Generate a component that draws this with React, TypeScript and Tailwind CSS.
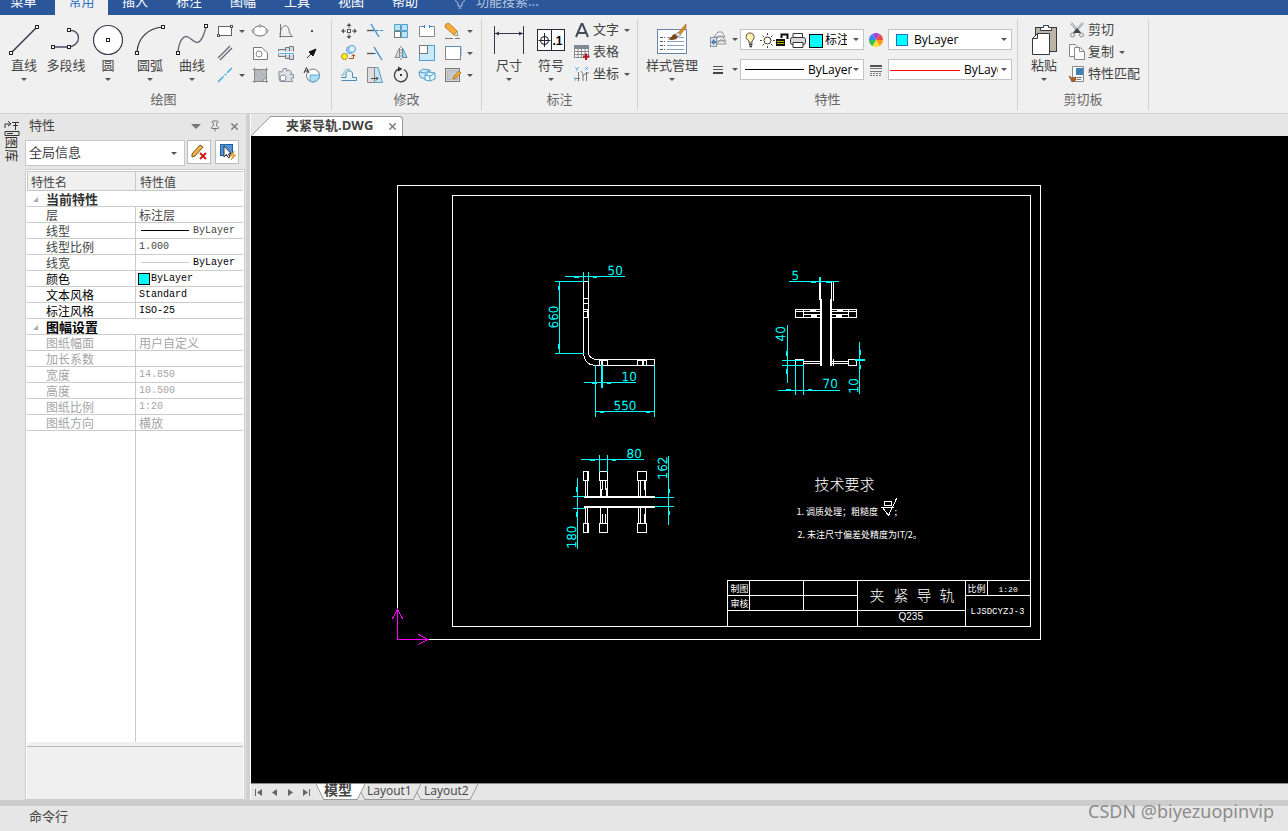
import type { ReactNode } from 'react';
import { Pin, X } from 'lucide-react';

interface IconProps {
  w?: number;
  h?: number;
  children: ReactNode;
}

function Icon({ w = 20, h = 20, children }: IconProps) {
  return (
    <svg width={w} height={h} viewBox={`0 0 ${w} ${h}`} fill="none" stroke="#555" strokeWidth="1" className="shrink-0" aria-hidden="true">
      {children}
    </svg>
  );
}

function Arrow() {
  return (
    <svg width="6" height="3" viewBox="0 0 6 3" className="shrink-0" aria-hidden="true">
      <path d="M0 0H6L3 3Z" fill="#555" />
    </svg>
  );
}

const handle = { width: 3, height: 3, fill: '#fff', stroke: '#222' };

const icons = {
  line: (
    <Icon w={34} h={34}>
      <path d="M5 29L29 5" stroke="#3b4050" strokeWidth="1.6" />
      <rect x="2.5" y="28.5" {...handle} />
      <rect x="28.5" y="2.5" {...handle} />
    </Icon>
  ),
  polyline: (
    <Icon w={34} h={34}>
      <path d="M4 24H18M20 7.500C33 6 33 24 18 24" stroke="#444c60" strokeWidth="1.3" />
      <rect x="2.500" y="22.500" {...handle} />
      <rect x="18.500" y="22.500" {...handle} />
      <rect x="18.500" y="5.500" {...handle} />
    </Icon>
  ),
  circle: (
    <Icon w={34} h={34}>
      <circle cx="17" cy="17" r="14.5" fill="#fff" stroke="#3b4050" strokeWidth="1.2" />
      <rect x="15.500" y="15.500" {...handle} />
    </Icon>
  ),
  arc: (
    <Icon w={34} h={34}>
      <path d="M4 29C5 15 15 5 30 4" stroke="#333" strokeWidth="1.2" />
      <rect x="2.500" y="28.500" {...handle} />
      <rect x="28.500" y="2.500" {...handle} />
    </Icon>
  ),
  spline: (
    <Icon w={34} h={34}>
      <path d="M3 29C4 17 9 12 13 14S21 22 25 18S29 9 31 5" stroke="#666b78" strokeWidth="1.3" />
      <rect x="1.500" y="28.500" {...handle} />
      <rect x="29.500" y="1.500" {...handle} />
    </Icon>
  ),
  dimension: (
    <Icon w={34} h={34}>
      <path d="M2.500 3V31M31.500 3V31M3 10.500H31" stroke="#333a4d" />
      <path d="M3 10.500L7 8.500V12.500ZM31 10.500L27 8.500V12.500Z" fill="#333a4d" stroke="none" />
    </Icon>
  ),
  symbol: (
    <Icon w={34} h={34}>
      <rect x="3.500" y="6.500" width="27" height="21" fill="#fff" stroke="#222a3a" />
      <path d="M17.500 6V28M10.500 10V24M4.500 17.500H16.500" stroke="#222a3a" />
      <circle cx="10.500" cy="17.500" r="4" stroke="#111" />
      <text x="18.500" y="22" fontSize="12" fontWeight="700" fill="#000" stroke="none" fontFamily="Liberation Sans, sans-serif">.1</text>
    </Icon>
  ),
  styles: (
    <Icon w={34} h={34}>
      <rect x="2.500" y="6.500" width="29" height="24" fill="#fff" stroke="#6685a8" />
      <path d="M5 14.500H10M5 18.500H10M5 22.500H10M5 26.500H10" stroke="#48688e" strokeDasharray="3 1" />
      <path d="M12 14.500H16M24 14.500H29M12 18.500H29M12 22.500H29M12 26.500H29" stroke="#8ba1bd" />
      <path d="M23 10L30 2L31 1V5L25 12Z" fill="#d98b2b" stroke="#a8611b" strokeWidth=".6" />
      <path d="M20 12L23 9L26 12L23 14Z" fill="#d9d9d9" stroke="#777" strokeWidth=".6" />
      <path d="M13 16C17 15 17 11 20 11L23 14C22 17 16 18 13 16Z" fill="#7b4a20" stroke="none" />
    </Icon>
  ),
  paste: (
    <Icon w={34} h={34}>
      <rect x="8.500" y="4.500" width="21" height="24" fill="#bdb3a6" stroke="#333a44" />
      <path d="M13.500 4.500H16.500V2.500H21.500V4.500H24.500V7.500H13.500Z" fill="#fff" stroke="#333a44" />
      <path d="M10.500 10.500H22.500V31.500H5.500V15.500Z" fill="#fff" stroke="#333a44" />
      <path d="M10.500 10.500V15.500H5.500" stroke="#333a44" />
    </Icon>
  ),
  rect: (
    <Icon>
      <rect x="3.500" y="5.500" width="13" height="9" fill="#fff" stroke="#666" />
      <rect x="2.500" y="13.500" width="2" height="2" fill="#fff" />
      <rect x="15.500" y="4.500" width="2" height="2" fill="#fff" />
    </Icon>
  ),
  ellipse: (
    <Icon>
      <ellipse cx="10" cy="10" rx="7" ry="5" fill="#fff" stroke="#666c78" />
      <path d="M2 9h2v2H2zM16 9h2v2h-2zM9 4h2v2H9z" fill="#fff" stroke="#777" strokeWidth=".7" />
    </Icon>
  ),
  curve: (
    <Icon>
      <path d="M4.500 3V16.500M3 15.500H17" stroke="#777" />
      <path d="M4 14C5 2 12 3 13 9S15 14 16 14" stroke="#777" />
    </Icon>
  ),
  point: (
    <Icon>
      <rect x="9" y="9" width="2" height="2" fill="#555" stroke="none" />
    </Icon>
  ),
  parallel: (
    <Icon>
      <path d="M3 15L15 3M5 17L17 5" stroke="#666b76" strokeWidth="1.4" />
    </Icon>
  ),
  contour: (
    <Icon>
      <path d="M3.500 4.500H12L17.500 10V16.500H3.500Z" fill="#fff" stroke="#777" />
      <circle cx="9" cy="11" r="3" stroke="#888" />
    </Icon>
  ),
  shaft: (
    <Icon>
      <path d="M2.500 6.500H9.500V4.500H13.500V3.500H17.500V16.500H13.500V15.500H9.500V13.500H2.500Z" fill="#d5d8dc" stroke="#6e7986" />
      <path d="M9.500 6V14M13.500 5V16" stroke="#6e7986" />
      <path d="M2 10H18" stroke="#fff" strokeWidth="3" />
      <path d="M2 10.500H18" stroke="#55aeea" />
    </Icon>
  ),
  pointer: (
    <Icon>
      <path d="M5 15L12 8" stroke="#333" />
      <path d="M14 6L7 9L11 13Z" fill="#111" stroke="#111" />
    </Icon>
  ),
  axis: (
    <Icon>
      <path d="M3 17L17 3" stroke="#3aace0" strokeWidth="1.400" strokeDasharray="8 1.500 2 1.500" />
    </Icon>
  ),
  hatch: (
    <Icon>
      <path d="M4.500 4.500H16.500V12L12 16.500H4.500Z" fill="#b8bcc2" stroke="#777" />
      <path d="M2.500 4.500H18M4.500 2.500V18M16.500 2.500V18M2.500 16.500H18" stroke="#888" />
      <path d="M5 8L13 16M8 5L16 13" stroke="#9a9ea5" strokeDasharray="1 1" />
    </Icon>
  ),
  gear: (
    <Icon>
      <path d="M7.500 3.500L10.500 3.500L10.500 6L13 5L15.500 7L14.500 9.500H17.500V13H15L16.500 16.500H4L3 13V6.500L6 7Z" fill="#dde1e6" stroke="#84909e" />
      <circle cx="7" cy="13" r="3" fill="#fff" stroke="#84909e" />
    </Icon>
  ),
  region: (
    <Icon>
      <circle cx="11" cy="10.500" r="6.500" fill="#fff" stroke="#777" />
      <path d="M8 10H17.500A6.500 6.500 0 0 1 8 16Z" fill="#aeddf7" stroke="#59a9d8" />
      <path d="M2 8L4.500 2.500L7 8M3 6H6" stroke="#333" />
    </Icon>
  ),
  move: (
    <Icon>
      <path d="M10 3V7M10 13V17M3 10H7M13 10H17" stroke="#555" />
      <path d="M10 2L7.500 5H12.500ZM10 18L7.500 15H12.500ZM2 10L5 7.500V12.500ZM18 10L15 7.500V12.500Z" fill="#555" stroke="none" />
      <rect x="8.500" y="8.500" width="3" height="3" fill="#fff" />
    </Icon>
  ),
  trim: (
    <Icon>
      <path d="M2 9.500H9" stroke="#555" strokeWidth="1.400" />
      <path d="M11 9.500H18" stroke="#3b8fd5" strokeDasharray="3 1" />
      <path d="M6 3L14 16" stroke="#3b8fd5" strokeWidth="1.400" />
    </Icon>
  ),
  array: (
    <Icon>
      <path d="M3.500 3.500H9.500V9.500H3.500ZM10.500 3.500H16.500V9.500H10.500ZM10.500 10.500H16.500V16.500H10.500Z" fill="#bfe4f8" stroke="#4d9fd0" />
      <rect x="3.500" y="10.500" width="6" height="6" fill="#fff" stroke="#777" />
    </Icon>
  ),
  breakAt: (
    <Icon>
      <path d="M6 5.500H2.500V15.500H17.500V5.500H13" fill="#fff" stroke="#888" />
      <path d="M5 5.500H8M12 5.500H15M7.500 4V7M12.500 4V7" stroke="#2e87cf" />
    </Icon>
  ),
  erase: (
    <Icon>
      <path d="M3 3L6 2.500L14 10L11 14L2 6Z" fill="#f6ad38" stroke="#c77c1c" />
      <path d="M11 14L14 10L15 15Z" fill="#f8ded0" stroke="#996" />
      <path d="M2 17.500H10M12 17.500H17" stroke="#777" />
    </Icon>
  ),
  copyObject: (
    <Icon>
      <circle cx="5.500" cy="13.500" r="3" fill="#ffee20" stroke="#a18f18" />
      <circle cx="11" cy="7" r="3.500" fill="#c9e8fa" stroke="#4b9ed4" />
      <circle cx="13" cy="6" r="3.500" fill="#e4f4fc" stroke="#4b9ed4" />
      <path d="M10 15.500H14.500V12M12.500 13L14.500 11.500L16.500 13" stroke="#a74b25" />
    </Icon>
  ),
  extend: (
    <Icon>
      <path d="M2 10.500H9" stroke="#555" strokeWidth="1.400" />
      <path d="M9 10.500H14" stroke="#3b8fd5" strokeDasharray="2 1" />
      <path d="M9 4L17 17" stroke="#3b8fd5" strokeWidth="1.400" />
    </Icon>
  ),
  mirror: (
    <Icon>
      <path d="M8.500 5V14.500H4Z" fill="#ddd" stroke="#888" />
      <path d="M11.500 5V14.500H16Z" fill="#a9d7f0" stroke="#5689aa" />
      <path d="M10 3V17" stroke="#888" strokeDasharray="2 1" />
    </Icon>
  ),
  scale: (
    <Icon>
      <rect x="2.500" y="2.500" width="15" height="15" fill="#c7e9fa" stroke="#4d9fd0" />
      <rect x="2.500" y="2.500" width="8" height="8" fill="#fff" stroke="#777" />
    </Icon>
  ),
  stretch: (
    <Icon>
      <rect x="2.500" y="3.500" width="15" height="13" fill="#fff" stroke="#888" />
      <path d="M2 3.500H18V13" stroke="#3b8fd5" strokeDasharray="2 1" />
    </Icon>
  ),
  offset: (
    <Icon>
      <path d="M2 12.500H7V8A3.500 3.500 0 0 1 13.500 8V12.500H17.500V15.500H2.500" fill="#e5f4fb" stroke="#5689aa" />
      <path d="M2 10H5V7A5 5 0 0 1 11 4.500" stroke="#66b5df" />
    </Icon>
  ),
  taper: (
    <Icon>
      <path d="M9.500 2.500H13L17.500 17.500H9.500Z" fill="#c4e5f6" stroke="#5a9bc0" />
      <path d="M2.500 2.500H9.500V17.500H2.500Z" fill="#ddd" stroke="#888" />
      <path d="M6 13.500H13M11 11.500L13 13.500L11 15.500" stroke="#444" />
    </Icon>
  ),
  rotate: (
    <Icon>
      <path d="M8 4A6.500 6.500 0 1 0 13 4.500" stroke="#444" strokeWidth="1.400" />
      <path d="M7 1.500L11.500 4L7 6.500Z" fill="#333" stroke="none" />
      <rect x="9" y="9" width="2" height="2" fill="#333" stroke="none" />
    </Icon>
  ),
  box3d: (
    <Icon>
      <path d="M2 7L6 4L13 5V12L8 14L3 12Z" fill="#cfeaf8" stroke="#4d9fd0" />
      <path d="M8 10L12 7L18 8V14L13 16L8 15Z" fill="#e9f7fd" stroke="#4d9fd0" />
      <path d="M2 7L8 8L13 5M8 10L13 11L18 8M13 11V16" stroke="#4d9fd0" />
    </Icon>
  ),
  editHatch: (
    <Icon>
      <rect x="2.500" y="3.500" width="14" height="13" fill="#fff" stroke="#777" />
      <rect x="4" y="5" width="11" height="10" fill="#c5c8cc" stroke="#aaa" />
      <path d="M10 14L11 11L16 6L18 8L13 13Z" fill="#f6ad38" stroke="#b97720" />
    </Icon>
  ),
  letter: (
    <Icon>
      <path d="M4 17L9.500 4H10.500L16 17M6 13H14" stroke="#454b57" strokeWidth="2" />
    </Icon>
  ),
  table: (
    <Icon>
      <rect x="2.500" y="3.500" width="14" height="12" fill="#fff" stroke="#888" />
      <rect x="2" y="3" width="15" height="4" fill="#7e8996" stroke="none" />
      <path d="M2 9.500H17M2 12.500H17M6 7V16M9.500 7V16M13 7V16" stroke="#888" />
      <path d="M14 11.500V18M11 14.500H17.500" stroke="#b61821" strokeWidth="2" />
    </Icon>
  ),
  coords: (
    <Icon>
      <path d="M6.500 8V17.500M3 14.500H8M14.500 8V17M11 17V10L9 7M11 12L14 9H17" stroke="#777" />
      <path d="M3 3L5 5L7 3M5 5V7M13 3L16 6M16 3L13 6M2 13L4 17" stroke="#58aedc" strokeWidth=".9" />
    </Icon>
  ),
  layers: (
    <Icon>
      <path d="M6 7L10 2H14L17 7ZM8 11L10 6H14L18 11ZM9 14L12 10H15L18 14Z" fill="#f4f5f7" stroke="#8d939c" />
      <rect x="2.500" y="7.500" width="6" height="9" fill="#e5eaf0" stroke="#8590a0" />
      <path d="M3.500 12H8M5.500 9.500V14.500" stroke="#4d7ca8" strokeWidth="2" />
    </Icon>
  ),
  lines: (
    <Icon>
      <path d="M5 6.500H15M5 9.500H15" stroke="#555" />
      <path d="M5 13H15" stroke="#444" strokeWidth="2" />
    </Icon>
  ),
  weights: (
    <Icon w={14} h={14}>
      <path d="M1 3H13" stroke="#555" strokeWidth="2" />
      <path d="M1 5.500H13M1 8.500H13" stroke="#777" />
      <path d="M1 10.500H13M1 12.500H13" stroke="#777" strokeDasharray="2 1" />
    </Icon>
  ),
  wheel: (
    <Icon w={14} h={14}>
      <g stroke="none">
        <path d="M7 7L3.500 1A7 7 0 0 1 10.500 1Z" fill="#a63ee8" />
        <path d="M7 7L10.500 1A7 7 0 0 1 14 7Z" fill="#ec4b42" />
        <path d="M7 7H14A7 7 0 0 1 10.500 13Z" fill="#ff9b1a" />
        <path d="M7 7L10.500 13A7 7 0 0 1 3.500 13Z" fill="#ffe02b" />
        <path d="M7 7L3.500 13A7 7 0 0 1 0 7Z" fill="#35bd57" />
        <path d="M7 7H0A7 7 0 0 1 3.500 1Z" fill="#3388ea" />
      </g>
    </Icon>
  ),
  cut: (
    <Icon>
      <path d="M4 3L13 13M16 3L7 13" stroke="#8a929c" strokeWidth="2.400" />
      <path d="M4 3L13 13M16 3L7 13" stroke="#eee" />
      <path d="M10 8L14 13H6Z" fill="#444" stroke="none" />
      <circle cx="5.500" cy="15" r="2" stroke="#888" />
      <circle cx="14.500" cy="15" r="2" stroke="#888" />
    </Icon>
  ),
  copy: (
    <Icon>
      <path d="M2.500 2.500H8L10.500 5V14.500H2.500Z" fill="#fff" stroke="#888" />
      <path d="M7.500 5.500H13L17.500 9.500V17.500H7.500Z" fill="#fff" stroke="#888" />
      <path d="M12.500 6V9.500H17" stroke="#888" />
    </Icon>
  ),
  match: (
    <Icon>
      <path d="M5.500 2.500H16.500V17.500H5.500Z" fill="#fff" stroke="#888" />
      <rect x="9" y="4" width="7" height="7" fill="#3d7fb9" stroke="none" />
      <path d="M10 13.500H15M10 15.500H14" stroke="#777" />
      <path d="M2 12L5 14L9 13V16L5 18Z" fill="#b9601c" stroke="#7c3b10" strokeWidth=".6" />
    </Icon>
  ),
};

const menus = ['插入', '标注', '图幅', '工具', '视图', '帮助'];

function MenuBar() {
  return (
    <nav className="flex h-[15px] items-end overflow-hidden bg-[#2b579a] text-[13px] leading-4 text-white">
      <button className="w-[55px] pr-2 pb-1.5">菜单</button>
      <button className="w-[53px] bg-[#f0f0f0] pb-1.5 text-[#2b6cc4]">常用</button>
      {menus.map((name) => (
        <button key={name} className="w-[54px] pb-1.5">{name}</button>
      ))}
      <div className="ml-5 flex items-end gap-2 text-[#b4c4de]">
        <svg width="16" height="17" viewBox="0 0 16 17" fill="none" stroke="#b4c4de" className="mb-1.5" aria-hidden="true">
          <path d="M6 14V11C2 9 2 3 8 3S14 9 10 11V14H6M6.500 16H9.500" />
        </svg>
        <span className="pb-1.5">功能搜索...</span>
      </div>
    </nav>
  );
}

function Group({ label, className, inner, children }: { label: string; className: string; inner: string; children: ReactNode }) {
  return (
    <section className={`flex flex-col border-r border-[#d2d2d2] ${className}`}>
      <div className={`flex h-[71px] ${inner}`}>{children}</div>
      <h2 className="text-center text-[13px] leading-[18px] text-[#666]">{label}</h2>
    </section>
  );
}

function BigButton({ icon, label, arrow = true, className = 'w-[42px]' }: { icon: ReactNode; label: string; arrow?: boolean; className?: string }) {
  return (
    <button className={`flex shrink-0 flex-col items-center pt-1 ${className}`}>
      {icon}
      <span className="text-[13px] leading-4 whitespace-nowrap">{label}</span>
      {arrow && <span className="mt-[5px]"><Arrow /></span>}
    </button>
  );
}

function Tool({ icon, label, arrow = false }: { icon: ReactNode; label: string; arrow?: boolean }) {
  return (
    <button aria-label={label} className="flex h-[22px] items-center pl-0.5">
      {icon}
      {arrow && <span className="pl-1"><Arrow /></span>}
    </button>
  );
}

function TextTool({ icon, label, arrow = false }: { icon: ReactNode; label: string; arrow?: boolean }) {
  return (
    <button className="flex h-[22px] items-center gap-px text-[13px] whitespace-nowrap">
      {icon}
      <span className="pb-0.5">{label}</span>
      {arrow && <span className="pl-1"><Arrow /></span>}
    </button>
  );
}

function Combo({ label, value, before, className }: { label: string; value: string; before: ReactNode; className: string }) {
  return (
    <div className="flex h-[21px] w-[124px] items-center border border-[#c3c3c3] bg-white pr-1 text-xs text-black">
      {before}
      <select aria-label={label} className={`min-w-0 appearance-none overflow-hidden font-['Open_Sans','Noto_Sans_CJK_SC',sans-serif] ${className}`}>
        <option>{value}</option>
      </select>
      <span className="ml-auto"><Arrow /></span>
    </div>
  );
}

function LayerIcons() {
  return (
    <Icon w={84} h={18}>
      <path d="M8 12V10C4 8 4 2 9 2S14 8 11 10V12Z" fill="#ffefb0" stroke="#554" />
      <path d="M8 13.500H11.500M8.500 15.500H11" stroke="#333" strokeWidth="1.500" />
      <circle cx="26.500" cy="9.500" r="3.500" fill="#fff" stroke="#443322" />
      <path d="M26.500 2V4M26.500 15V17M19 9.500H21M32 9.500H34M21.500 4.500L23 6M30 13L31.500 14.500M31.500 4.500L30 6M23 13L21.500 14.500" stroke="#554433" />
      <path d="M35 8H44V15H35Z" fill="#111" stroke="none" />
      <path d="M36 10.500H43M36 12.500H43" stroke="#b4b400" />
      <path d="M40.500 7V3.500H46.500V8" stroke="#111" strokeWidth="2" />
      <path d="M52 7V2.500H61.500V7" fill="#fff" stroke="#333" />
      <rect x="49.500" y="6.500" width="15" height="7" rx="2" fill="#d6d9dd" stroke="#333" />
      <path d="M52 11.500H62V16.500H52Z" fill="#fff" stroke="#333" />
      <rect x="68.500" y="3.500" width="13" height="13" fill="#00ffff" stroke="#000" />
    </Icon>
  );
}

function Ribbon() {
  return (
    <div className="flex h-[99px] border-b border-[#d2d2d2] bg-[#f0f0f0] pt-1 pb-[3px] text-[#444]">
      <Group label="绘图" className="w-[332px] pr-1" inner="pl-[3px]">
        <BigButton icon={icons.line} label="直线" />
        <BigButton icon={icons.polyline} label="多段线" arrow={false} />
        <BigButton icon={icons.circle} label="圆" />
        <BigButton icon={icons.arc} label="圆弧" />
        <BigButton icon={icons.spline} label="曲线" />
        <div className="grid h-[66px] grid-cols-[35px_26px_26px_26px] pt-px">
          <Tool icon={icons.rect} label="矩形" arrow />
          <Tool icon={icons.ellipse} label="椭圆" />
          <Tool icon={icons.curve} label="公式曲线" />
          <Tool icon={icons.point} label="点" />
          <Tool icon={icons.parallel} label="平行线" />
          <Tool icon={icons.contour} label="局部放大" />
          <Tool icon={icons.shaft} label="孔/轴" />
          <Tool icon={icons.pointer} label="箭头" />
          <Tool icon={icons.axis} label="中心线" arrow />
          <Tool icon={icons.hatch} label="剖面线" />
          <Tool icon={icons.gear} label="齿形" />
          <Tool icon={icons.region} label="填充" />
        </div>
      </Group>
      <Group label="修改" className="w-[150px]" inner="pl-[5px]">
        <div className="grid h-[66px] grid-cols-[26px_26px_26px_26px_36px] pt-px">
          <Tool icon={icons.move} label="平移" />
          <Tool icon={icons.trim} label="裁剪" />
          <Tool icon={icons.array} label="阵列" />
          <Tool icon={icons.breakAt} label="打断" />
          <Tool icon={icons.erase} label="删除" arrow />
          <Tool icon={icons.copyObject} label="平移复制" />
          <Tool icon={icons.extend} label="延伸" />
          <Tool icon={icons.mirror} label="镜像" />
          <Tool icon={icons.scale} label="缩放" />
          <Tool icon={icons.stretch} label="拉伸" arrow />
          <Tool icon={icons.offset} label="等距线" />
          <Tool icon={icons.taper} label="过渡" />
          <Tool icon={icons.rotate} label="旋转" />
          <Tool icon={icons.box3d} label="分解" />
          <Tool icon={icons.editHatch} label="编辑剖面线" arrow />
        </div>
      </Group>
      <Group label="标注" className="w-[156px]" inner="pl-1.5">
        <BigButton icon={icons.dimension} label="尺寸" />
        <BigButton icon={icons.symbol} label="符号" />
        <div>
          <TextTool icon={icons.letter} label="文字" arrow />
          <TextTool icon={icons.table} label="表格" />
          <TextTool icon={icons.coords} label="坐标" arrow />
        </div>
      </Group>
      <Group label="特性" className="w-[380px]" inner="pl-1.5">
        <BigButton icon={icons.styles} label="样式管理" className="w-14" />
        <div className="grid grid-cols-[34px_124px_24px_124px] grid-rows-[21px_21px] items-center gap-y-[9px] pt-2.5 pl-1.5">
          <Tool icon={icons.layers} label="图层" arrow />
          <Combo label="当前层" value="标注层" before={<LayerIcons />} className="w-[22px]" />
          <span className="flex justify-center">{icons.wheel}</span>
          <Combo label="颜色" value="ByLayer" before={<span className="mr-1.5 ml-[7px] size-3 border border-[#1874cd] bg-[#00ffff]" />} className="w-20" />
          <Tool icon={icons.lines} label="线型管理" arrow />
          <Combo label="线型" value="ByLayer" before={<span className="mr-1 ml-1 h-px w-[59px] shrink-0 bg-black" />} className="w-11" />
          <span className="flex justify-center">{icons.weights}</span>
          <Combo
            label="线宽"
            value="ByLayer"
            before={
              <svg width="75" height="19" viewBox="0 0 75 19" className="shrink-0" aria-hidden="true">
                <path d="M1 10.500H71" stroke="#ff0000" />
              </svg>
            }
            className="w-[34px]"
          />
        </div>
      </Group>
      <Group label="剪切板" className="w-[131px]" inner="pl-[5px]">
        <BigButton icon={icons.paste} label="粘贴" />
        <div className="pl-0.5">
          <TextTool icon={icons.cut} label="剪切" />
          <TextTool icon={icons.copy} label="复制" arrow />
          <TextTool icon={icons.match} label="特性匹配" />
        </div>
      </Group>
    </div>
  );
}

interface Row {
  name: string;
  value?: ReactNode;
  tone: string;
  heading?: boolean;
}

const mono = "flex h-[15px] items-center font-['Liberation_Mono',monospace] text-[10px] leading-[15px]";

const rows: Row[] = [
  { name: '当前特性', tone: 'text-[#333]', heading: true },
  { name: '层', value: '标注层', tone: 'text-[#444]' },
  { name: '线型', value: <span className={`gap-1 pl-0.5 ${mono}`}><i className="h-px w-12 bg-black" />ByLayer</span>, tone: 'text-[#444]' },
  { name: '线型比例', value: <span className={mono}>1.000</span>, tone: 'text-[#444]' },
  { name: '线宽', value: <span className={`gap-1 pl-0.5 text-black ${mono}`}><i className="h-px w-12 bg-[#ccc]" />ByLayer</span>, tone: 'text-[#444]' },
  { name: '颜色', value: <span className={`-ml-px gap-px ${mono}`}><i className="size-3 border border-black bg-[#0ff]" />ByLayer</span>, tone: 'text-black' },
  { name: '文本风格', value: <span className={mono}>Standard</span>, tone: 'text-black' },
  { name: '标注风格', value: <span className={mono}>ISO-25</span>, tone: 'text-black' },
  { name: '图幅设置', tone: 'text-black', heading: true },
  { name: '图纸幅面', value: '用户自定义', tone: 'text-[#a5a5a5]' },
  { name: '加长系数', value: '', tone: 'text-[#a5a5a5]' },
  { name: '宽度', value: <span className={mono}>14.850</span>, tone: 'text-[#a5a5a5]' },
  { name: '高度', value: <span className={mono}>10.500</span>, tone: 'text-[#a5a5a5]' },
  { name: '图纸比例', value: <span className={mono}>1:20</span>, tone: 'text-[#a5a5a5]' },
  { name: '图纸方向', value: '横放', tone: 'text-[#a5a5a5]' },
];

function PropertyTable() {
  return (
    <table className="w-full table-fixed border-separate border-spacing-0 text-xs leading-[15px]">
      <colgroup>
        <col className="w-[109px]" />
        <col />
      </colgroup>
      <thead>
        <tr className="h-5 bg-[#f0f0f0] text-left text-[#444]">
          <th className="border-y border-r border-l border-[#c8c8c8] pl-[3px] font-normal">特性名</th>
          <th className="border-y border-[#c8c8c8] pl-1 font-normal">特性值</th>
        </tr>
      </thead>
      <tbody>
        {rows.map((row) =>
          row.heading ? (
            <tr key={row.name} className={`h-4 ${row.tone}`}>
              <th colSpan={2} className="h-4 border-b border-[#ccc] p-0 text-left text-[13px] leading-[15px] font-bold">
                <span className="flex items-center">
                  <svg width="19" height="10" viewBox="0 0 19 10" aria-hidden="true">
                    <path d="M11 3V8H6Z" fill="#aaa" />
                  </svg>
                  {row.name}
                </span>
              </th>
            </tr>
          ) : (
            <tr key={row.name} className={`h-4 ${row.tone}`}>
              <td className="h-4 border-r border-b border-[#ccc] p-0 pl-[19px]">{row.name}</td>
              <td className="h-4 border-b border-[#ccc] p-0 pl-[3px]">{row.value}</td>
            </tr>
          )
        )}
      </tbody>
    </table>
  );
}

function PropertyPanel() {
  return (
    <aside className="flex w-[220px] shrink-0 flex-col">
      <header className="flex h-6 items-center gap-2 pr-[5px] pl-1 text-[13px] text-[#444]">
        <h2 className="flex-1 pb-0.5">特性</h2>
        <button aria-label="选项">
          <svg width="10" height="5" viewBox="0 0 10 5" aria-hidden="true"><path d="M0 0H10L5 5Z" fill="#777" /></svg>
        </button>
        <button aria-label="固定"><Pin size={12} color="#777" /></button>
        <button aria-label="关闭"><X size={11} color="#777" strokeWidth={3} /></button>
      </header>
      <div className="flex gap-0.5 pt-0.5 pb-[3px]">
        <div className="flex h-[26px] w-[160px] items-center border border-[#c8c8c8] bg-white pr-[7px] pl-[3px]">
          <select aria-label="对象" className="flex-1 appearance-none pb-0.5 text-[13px] text-[#444]">
            <option>全局信息</option>
          </select>
          <Arrow />
        </div>
        <div className="flex gap-1">
          <button aria-label="清除" className="flex size-6 items-center justify-center border border-[#bbb] bg-white">
            <Icon>
              <path d="M3 12L11 3L14 5L6 14L3 15Z" fill="#f5b33d" stroke="#6c5423" />
              <path d="M11 11L17 17M17 11L11 17" stroke="#d21a1a" strokeWidth="2" />
            </Icon>
          </button>
          <button aria-label="快速选择" className="flex size-6 items-center justify-center border border-[#bbb] bg-white">
            <Icon>
              <rect x="3.500" y="2.500" width="12" height="11" fill="#4d95d8" stroke="#1f5fa5" />
              <path d="M7 4V15L9.500 12.500L11.500 16L13 15L11.500 12L14 11.500Z" fill="#fff" stroke="#333" />
              <path d="M17 9L13 14H16L14 18L19 13H16Z" fill="#ffbf3a" stroke="#d27f12" strokeWidth=".6" />
            </Icon>
          </button>
        </div>
      </div>
      <div className="flex flex-1 flex-col border border-[#ccc] bg-white px-px pt-px">
        <PropertyTable />
        <div className="flex-1">
          <div className="h-full w-[109px] border-r border-[#ccc]" />
        </div>
        <div className="h-1 bg-[#f0f0f0]" />
        <div className="h-[53px] border-t border-[#b8b8b8] bg-[#f0f0f0]" />
      </div>
    </aside>
  );
}

const cjk = "'Noto Sans CJK SC', sans-serif";

function Dim({ x, y, upright = false, children }: { x: number; y: number; upright?: boolean; children: string }) {
  return (
    <text x={x} y={y} transform={upright ? `rotate(-90 ${x} ${y})` : undefined}>
      {children}
    </text>
  );
}

function Drawing() {
  return (
    <svg className="block h-full w-full" role="img" aria-label="夹紧导轨">
      {/* half-pixel shift puts whole-number strokes on pixel centres */}
      <g transform="translate(-250.5 -135.5)" fill="none" stroke="#fff" strokeLinecap="square" shapeRendering="crispEdges">
        <path d="M397 185H1040V639H397ZM452 195H1030V626H452Z" />

        {/* title block */}
        <path d="M727 626V580H1030M727 595H857M727 610H965M749 580V610M803 580V610M857 580V626M965 580V626M987 580V595M965 595H1030" />

        {/* side view */}
        <path d="M583 353V281H588V353M583 298H588M583 303H588M583 309H588M583 311H588M583 317H588M587 309V317" />
        <path d="M583 353Q584 364 594 365H654V359H596Q589 358 588 353" />
        <path d="M599 360V365M601 360V365M602 360V365M607 360V365M599 360H607M637 360V365M642 360V365M643 360V365M646 360V365M637 360H646" />

        {/* front view */}
        <path d="M819 282V299M820 282V299M831 282V300M833 282V300" />
        <path d="M820 299V365M821 299V365M830 299V365M831 299V365" />
        <path d="M795 309H820M795 311H820M803 314H820M795 317H820M795 309V317M803 309V317M810 310H815M811 315H816M811 316H816" />
        <path d="M831 309H856M831 311H856M831 314H848M831 317H856M848 309V317M856 309V317M837 310H842M836 315H841M836 316H841" />
        <path d="M795 359H803V365H795ZM803 361H820M803 363H820M848 359H856V365H848ZM833 359V365M831 361H848M831 363H848" />

        {/* top view */}
        <path d="M583 471H588V480H583ZM599 471H607V480H599ZM637 471H646V480H637ZM583 523H588V532H583ZM599 523H607V532H599ZM637 523H646V532H637Z" />
        <path d="M587 471V480M585 481V495M587 481V495M585 508V523M587 508V523M587 523V532" />
        <path d="M600 480V496M602 480V489M601 489V496M605 480V489M607 480V496M606 488V496M600 507V523M602 514V523M605 514V523M607 507V523" />
        <path d="M638 480V496M640 480V496M644 480V489M645 480V496M638 507V523M640 507V523M644 514V523M645 507V523" />
        <path d="M584 496H654M584 497H654M584 506H654M584 507H654" />

        <g stroke="#0ff">
          <path d="M565 276H624M583 272V281M588 272V281M555 281H583M555 353H583M559 281V353" />
          <path d="M584 382H635M601 365V387M602 365V387M595 365V416M654 365V416M595 411H654" />
          <path d="M574 277H578M593 277H596M558 286V289M558 344V348M592 383H596M607 383H610M600 412H603M646 412H649" />

          <path d="M789 281H838M819 277V282M820 277V282M787 325V382M782 360H803M782 365H803" />
          <path d="M778 390H839M795 365V394M803 365V394M859 342V393M855 359H864M855 360H864" />
          <path d="M811 282H815M826 282H830M786 351V355M786 369V373M786 389H790M808 389H811M860 350V354M860 365V368" />

          <path d="M581 459H643M599 455V471M607 455V471M577 478V548M573 496H584M573 508H584" />
          <path d="M668 456V524M654 497H673M654 506H673M590 460H594M612 460H615M576 487V491M576 512V516M669 489V492M669 511V514" />
        </g>

        <g fill="#0ff" stroke="#0ff" strokeWidth=".4" fontFamily="'DejaVu Sans', sans-serif" fontSize="12" fontWeight="200">
          <Dim x={607} y={274}>50</Dim>
          <Dim x={557} y={328} upright>660</Dim>
          <Dim x={621} y={380}>10</Dim>
          <Dim x={613} y={409}>550</Dim>
          <Dim x={791} y={279}>5</Dim>
          <Dim x={784} y={341} upright>40</Dim>
          <Dim x={822} y={387}>70</Dim>
          <Dim x={857} y={393} upright>10</Dim>
          <Dim x={626} y={457}>80</Dim>
          <Dim x={666} y={479} upright>162</Dim>
          <Dim x={575} y={548} upright>180</Dim>
        </g>

        <g fill="#fff" stroke="none" fontFamily={cjk} fontSize="9">
          <text x="814" y="489" fontSize="15" fontWeight="300">技术要求</text>
          <text x="796" y="514">1. 调质处理；粗糙度</text>
          <text x="894" y="514">;</text>
          <text x="797" y="537">2. 未注尺寸偏差处精度为IT/2。</text>
          <text x="730" y="591">制图</text>
          <text x="730" y="606">审核</text>
          <text x="967" y="591">比例</text>
          <text y="600" fontSize="15" fontWeight="300">
            <tspan x="869">夹</tspan>
            <tspan x="893">紧</tspan>
            <tspan x="916">导</tspan>
            <tspan x="939">轨</tspan>
          </text>
          <text x="898" y="619" fontSize="10" fontFamily="'Liberation Sans', sans-serif">Q235</text>
          <text x="998" y="591" fontSize="8" fontFamily="'Liberation Mono', monospace">1:20</text>
          <text x="970" y="613" fontFamily="'Liberation Mono', monospace">LJSDCYZJ-3</text>
        </g>
        <path d="M881 507H893M882 507L888 515L896 498M884 501H891V505H884Z" />

        <path d="M397 639V610M397 639H427M392 618L397 609L402 618M418 634L427 639L418 644" stroke="#f0f" />
      </g>
    </svg>
  );
}

function EndMark() {
  return (
    <svg width="7" height="7" viewBox="0 0 7 7" aria-hidden="true">
      <path d="M0 0H1V7H0ZM7 0V7L2 3.500Z" fill="#666" />
    </svg>
  );
}

function SheetTabs() {
  return (
    <div className="flex h-[17px] items-stretch border-t border-[#888] text-xs leading-[15px] text-[#444]">
      <div className="flex w-[65px] items-center justify-between pr-1.5 pl-1">
        <button aria-label="首页"><EndMark /></button>
        <button aria-label="上一页">
          <svg width="5" height="7" viewBox="0 0 5 7" aria-hidden="true"><path d="M5 0V7L0 3.500Z" fill="#666" /></svg>
        </button>
        <button aria-label="下一页">
          <svg width="5" height="7" viewBox="0 0 5 7" aria-hidden="true"><path d="M0 0V7L5 3.500Z" fill="#666" /></svg>
        </button>
        <button aria-label="末页" className="rotate-180"><EndMark /></button>
      </div>
      <svg width="8" height="16" viewBox="0 0 8 16" aria-hidden="true">
        <path d="M0 0H8V16Z" fill="#fff" />
        <path d="M0 0L8 16" stroke="#999" />
      </svg>
      <button className="w-[33px] border-b border-[#999] bg-white pb-1 text-left text-sm leading-[11px] font-bold whitespace-nowrap">模型</button>
      <svg width="8" height="16" viewBox="0 0 8 16" aria-hidden="true">
        <path d="M0 0H8L0 16Z" fill="#fff" />
        <path d="M8 0L0 16M4 8L8 16" stroke="#999" />
      </svg>
      <button className="w-12 border-b border-[#999] pb-0.5 pl-0.5 text-left font-['Open_Sans',sans-serif] leading-[13px]">Layout1</button>
      <svg width="8" height="16" viewBox="0 0 8 16" aria-hidden="true">
        <path d="M8 0L0 16M4 8L8 16" stroke="#999" />
      </svg>
      <button className="w-[49px] border-b border-[#999] pb-0.5 pl-[3px] text-left font-['Open_Sans',sans-serif] leading-[13px]">Layout2</button>
      <svg width="8" height="16" viewBox="0 0 8 16" aria-hidden="true">
        <path d="M8 0L0 16" stroke="#999" />
      </svg>
    </div>
  );
}

function DocumentArea() {
  return (
    <main className="flex min-w-0 flex-1 flex-col">
      <div className="flex h-[22px] items-end">
        <svg width="20" height="20" viewBox="0 0 20 20" aria-hidden="true">
          <path d="M0 20L20 0V20Z" fill="#fff" />
          <path d="M0 20L20 0" stroke="#999" />
        </svg>
        <div className="flex h-5 w-[132px] items-center justify-between rounded-tr-sm border-t border-r border-[#999] bg-white pr-1 pl-[15px] text-[#444]">
          <span className="pb-0.5 font-['Open_Sans','Noto_Sans_CJK_SC',sans-serif] text-[13px] font-bold whitespace-nowrap">夹紧导轨.DWG</span>
          <button aria-label="关闭文档"><X size={11} color="#777" strokeWidth={3} /></button>
        </div>
      </div>
      <div className="min-h-0 flex-1 overflow-hidden bg-black">
        <Drawing />
      </div>
      <SheetTabs />
    </main>
  );
}

export default function App() {
  return (
    <div className="relative flex h-screen flex-col overflow-hidden bg-[#e6e6e6] font-['Noto_Sans_CJK_SC',sans-serif]">
      <MenuBar />
      <Ribbon />
      <div className="flex min-h-0 flex-1">
        <div className="w-[25px] shrink-0 pt-1.5 pl-1">
          <button className="flex flex-col items-center text-[#333]">
            <Icon w={16} h={16}>
              <path d="M1 8V4H6M4 1L7 4L4 6M8 2.500H15M9 5.500H14M11.500 3V10M1 11.500H15V15.500H1ZM3 13.500H9" stroke="#333" />
            </Icon>
            <span className="text-[13px] leading-4 [text-orientation:sideways] [writing-mode:vertical-rl]">图库</span>
          </button>
        </div>
        <PropertyPanel />
        <div className="w-1.5 shrink-0 border-r border-l border-r-white border-l-[#e6e6e6] bg-[#d0d0d0]" />
        <DocumentArea />
      </div>
      <div className="h-1.5 bg-[#ccc]" />
      <footer className="flex h-[25px] items-center pb-1.5 pl-[29px] text-[13px] text-[#444]">命令行</footer>
      <p className="absolute right-3.5 bottom-2 font-['Noto_Sans',sans-serif] text-lg leading-6 text-[#8c8c8c]">CSDN @biyezuopinvip</p>
    </div>
  );
}
